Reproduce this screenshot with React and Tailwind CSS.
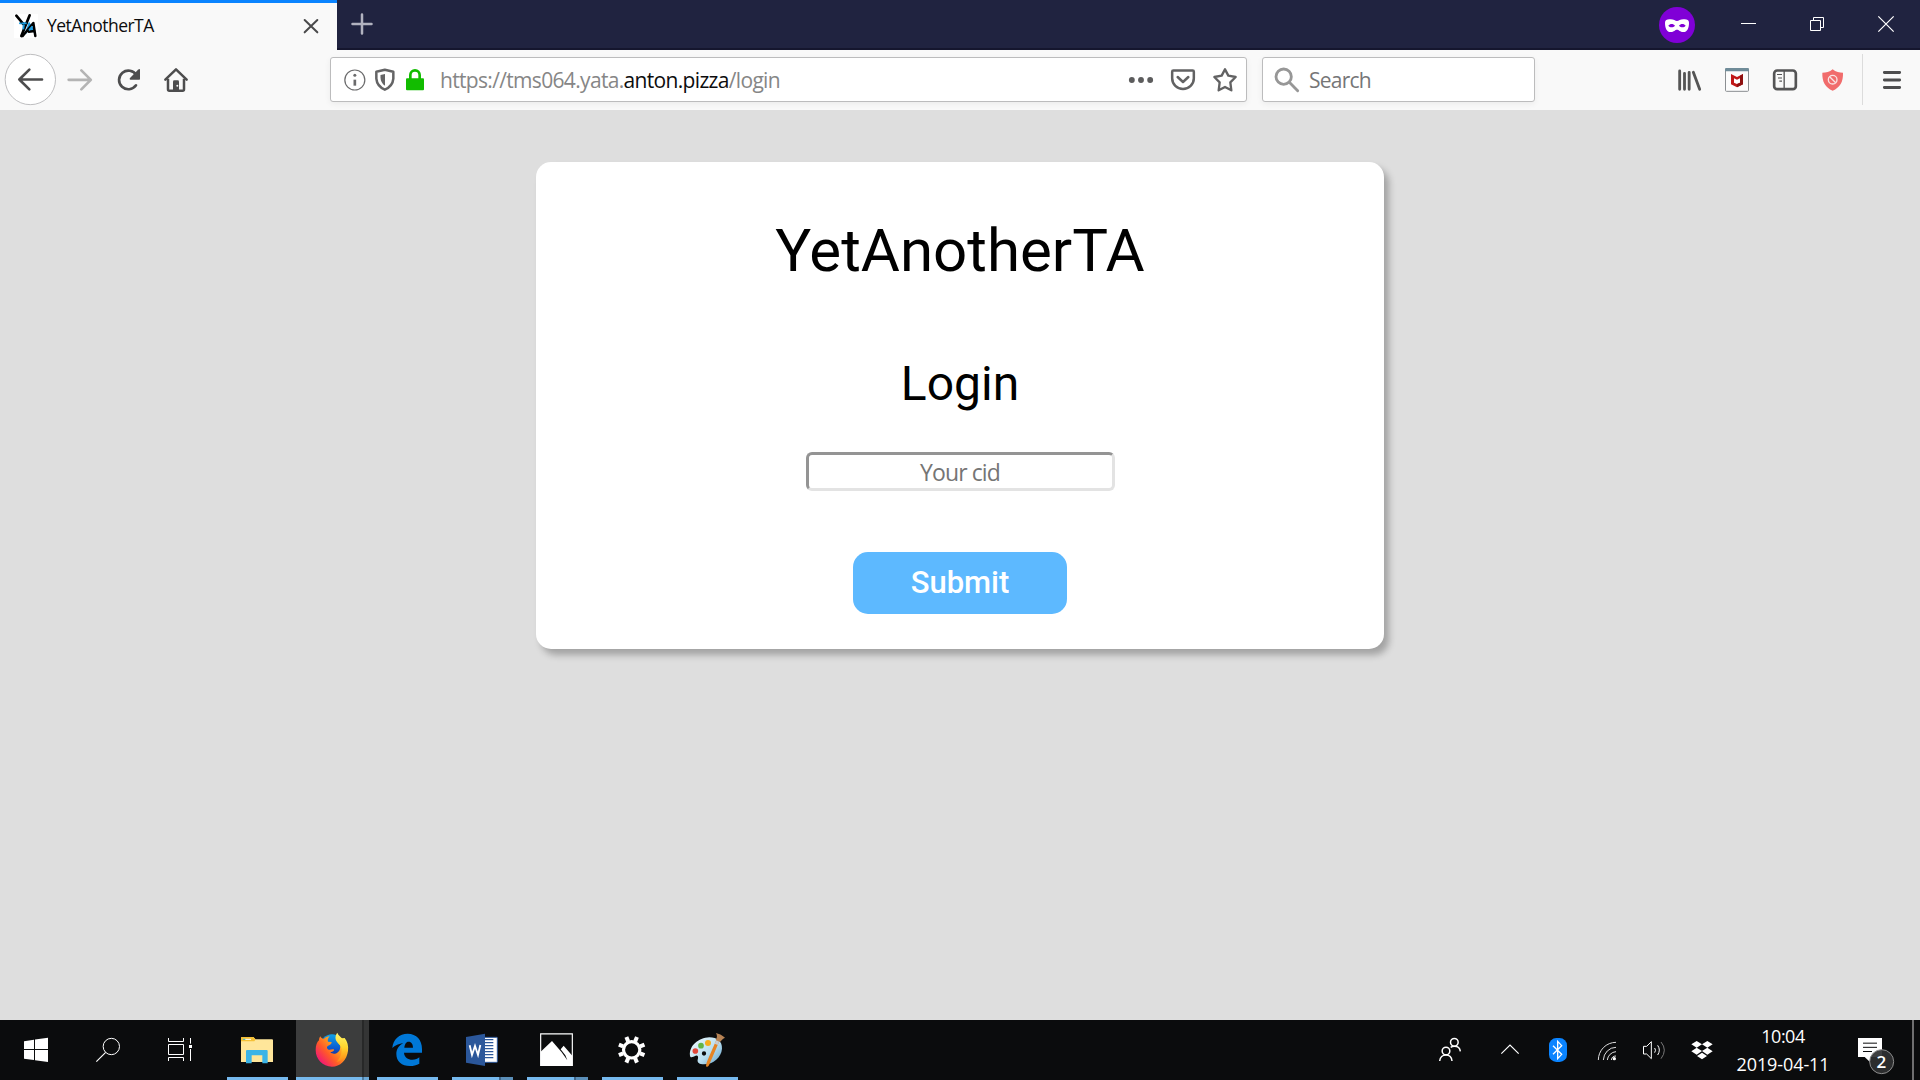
const SEGOE = "font-['Open_Sans','Noto_Sans',sans-serif]";

function Seg({ w, h = 60, vb, children, className = "" }) {
  return (
    <svg width={w} height={h} viewBox={vb} fill="none" className={"block shrink-0 " + className}>
      {children}
    </svg>
  );
}

function TabStrip() {
  return (
    <div className="flex h-[50px] w-full bg-[#202340]">
      <div className="flex h-[50px] w-[337px] shrink-0 items-center border-t-[3px] border-[#0a84ff] bg-[#f9f9f9]">
        <Seg w={47} h={47} vb="0 9 141 141">
          <rect x="42" y="42" width="72" height="72" fill="#fff" />
          <path d="M60 70H82M71 70V92M78 98L88 72L103 95M82 90H100" stroke="#1a9be0" strokeWidth="6" strokeLinecap="round" />
          <path d="M49 47L70 72M89 46L64 108" stroke="#000" strokeWidth="8" strokeLinecap="round" />
          <path d="M68 108L100 69L106 108M86 95L104 93" stroke="#000" strokeWidth="7.500" strokeLinecap="round" strokeLinejoin="round" />
          <path d="M64 70H80M72 74L70 88M87 91L97 79" stroke="#1a9be0" strokeWidth="5" />
        </Seg>
        <span className={"-mt-[3px] w-[250px] text-[17.5px] leading-[24px] tracking-[-0.5px] text-[#0c0c0d] " + SEGOE}>YetAnotherTA</span>
        <Seg w={40} h={47} vb="891 9 120 141">
          <path d="M914 60L952 97M952 60L914 97" stroke="#4a4a4b" strokeWidth="6" strokeLinecap="round" />
        </Seg>
      </div>
      <div className="flex h-[50px] grow justify-between border-b-2 border-[#15162e]">
        <Seg w={60} h={48} vb="1011 0 180 144">
          <path d="M1086 43.500V100.500M1057.500 72H1114.500" stroke="#b1b2bf" strokeWidth="7.500" strokeLinecap="round" />
        </Seg>
        <Seg w={270} h={48} vb="90 0 810 144">
          <circle cx="171" cy="75" r="54" fill="#8000d7" />
          <path fillRule="evenodd" d="M135 68C135 59 143 57 152 58C161 58 166 63 171 63C176 63 181 58 190 58C199 57 207 59 207 68C207 84 202 96 190 96C180 96 177 89 171 89C165 89 162 96 152 96C140 96 135 84 135 68ZM145 77C150 70 160 70 165 77C159 83 150 83 145 77ZM177 77C182 70 192 70 197 77C192 83 183 83 177 77Z" fill="#fff" />
          <path d="M363 70.500H408" stroke="#fff" strokeWidth="3" />
          <path d="M571.500 61.500H601.500V91.500H571.500ZM580.500 61V52.500H610.500V82.500H602" stroke="#fff" strokeWidth="3" />
          <path d="M775 49L821 95M821 49L775 95" stroke="#fff" strokeWidth="3.700" />
        </Seg>
      </div>
    </div>
  );
}

function Toolbar() {
  return (
    <div className="flex h-[60px] w-full items-center bg-[#f9f9f9]">
      <Seg w={60} vb="0 150 180 180">
        <circle cx="91" cy="238.500" r="75.500" fill="#fff" stroke="#b1b1b3" strokeWidth="2.500" />
        <path d="M126 238.500H58M88 209L58 238.500L88 268" stroke="#4d4d4e" strokeWidth="8" strokeLinecap="round" strokeLinejoin="round" />
      </Seg>
      <Seg w={45} vb="180 150 135 180">
        <path d="M206 239.500H272M244 211L272.500 239.500L244 268" stroke="#b4b4b4" strokeWidth="8" strokeLinecap="round" strokeLinejoin="round" />
      </Seg>
      <Seg w={45} vb="315 150 135 180">
        <path d="M409 225A28 28 0 1 0 408 256" stroke="#4d4d4e" strokeWidth="8" strokeLinecap="round" />
        <path d="M420 210V237Q420 239 418 239H391Q387 238 390 234L414 209Q420 205 420 210Z" fill="#4d4d4e" />
      </Seg>
      <Seg w={60} vb="450 150 180 180">
        <path d="M496 239L528 208L560 239" stroke="#4d4d4e" strokeWidth="7.500" strokeLinecap="round" strokeLinejoin="round" />
        <path d="M504 236V268Q504 272.500 508 272.500H548Q552 272.500 552 268V236" stroke="#4d4d4e" strokeWidth="7.500" />
        <path d="M519 276V245Q519 241 523 241H533Q537 241 537 245V276Z" fill="#4d4d4e" />
        <circle cx="532" cy="257" r="3" fill="#f9f9f9" />
      </Seg>
      <div className="w-[120px] shrink-0" />
      <div className="-mt-px flex h-[45px] w-[917px] shrink-0 items-center rounded-[3px] border border-[#bcbcbd] bg-white shadow-[0_2px_6px_rgba(0,0,0,0.06)]">
        <Seg w={109} h={43} vb="33 39 327 129">
          <circle cx="104.500" cy="105" r="30" stroke="#6b6b6c" strokeWidth="3.700" />
          <path d="M104.500 104V122" stroke="#6b6b6c" strokeWidth="8" />
          <circle cx="104.500" cy="90.500" r="4.500" fill="#6b6b6c" />
          <path d="M194.500 74L220 80V101Q218 124 194.500 134Q171 124 169 101V80Z" stroke="#646465" strokeWidth="7.500" strokeLinejoin="round" />
          <path d="M195 87V122Q182 113 181.500 98V90Z" fill="#646465" />
          <path d="M271 102V90A14 14 0 0 1 299 90V102" stroke="#12bc00" strokeWidth="8" />
          <rect x="258" y="100" width="54" height="36" rx="3" fill="#12bc00" />
        </Seg>
        <div className={"w-[679px] whitespace-pre pt-px text-[21px] leading-[30px] tracking-[-0.67px] text-[#868686] " + SEGOE}>
          https://tms064.yata.<span className="text-[#0c0c0d]">anton.pizza</span>/login
        </div>
        <Seg w={127} h={43} vb="57 39 381 129">
          <g fill="#5c5c5d">
            <circle cx="95.500" cy="105" r="8.800" />
            <circle cx="123" cy="105" r="8.800" />
            <circle cx="150.500" cy="105" r="8.800" />
          </g>
          <path d="M216.500 80Q216.500 76.500 220 76.500H278Q281.500 76.500 281.500 80V100A32.500 32 0 0 1 216.500 100Z" stroke="#626263" strokeWidth="7.500" />
          <path d="M233 96L249 111L265 96" stroke="#626263" strokeWidth="7.500" strokeLinecap="round" strokeLinejoin="round" />
          <path d="M375 73L385 92L407 96L391 112L394 136L375 126L356 136L359 112L343 96L365 92Z" stroke="#626263" strokeWidth="7" strokeLinejoin="round" />
        </Seg>
      </div>
      <div className="-mt-px ml-[15px] flex h-[45px] w-[273px] shrink-0 items-center rounded-[3px] border border-[#bcbcbd] bg-white shadow-[0_2px_6px_rgba(0,0,0,0.06)]">
        <Seg w={46} h={43} vb="489 39 138 129">
          <circle cx="551" cy="95" r="23" stroke="#979797" strokeWidth="8.500" />
          <path d="M568 112L593 137" stroke="#979797" strokeWidth="8.500" strokeLinecap="round" />
        </Seg>
        <span className={"pt-px text-[21px] leading-[30px] tracking-[-0.75px] text-[#767677] " + SEGOE}>Search</span>
      </div>
      <div className="grow" />
      <Seg w={55} vb="120 150 165 180">
        <path d="M179 213V268M193.500 220V268M207.500 217V268M220 217L239 268" stroke="#555" strokeWidth="8.500" strokeLinecap="round" />
      </Seg>
      <Seg w={45} vb="285 150 135 180">
        <rect x="316.500" y="206" width="69" height="68" rx="3" fill="#fcfcfc" stroke="#8b8f92" strokeWidth="3" />
        <path d="M315 208Q315 204 319 204H383Q387 204 387 208V214H315Z" fill="#708c99" />
        <path d="M333 222L351 231L369 222V253L351 262L333 253Z" fill="#c01818" />
        <path d="M342 235L351 239L360 235V248L351 252L342 248Z" fill="#fff" />
        <path d="M369 222V253L351 262V252L360 248V227Z" fill="#8e1111" />
      </Seg>
      <Seg w={45} vb="420 150 135 180">
        <rect x="462.500" y="211.500" width="65" height="56" rx="9" stroke="#545455" strokeWidth="8" />
        <path d="M492.500 213V266" stroke="#545455" strokeWidth="4" />
        <path d="M471 223.500H486M474 234H486M478 243.500H486" stroke="#545455" strokeWidth="3.500" />
      </Seg>
      <Seg w={57} vb="555 150 171 180">
        <path d="M638 208C647 216 659 218 669 218C670 246 660 262 638 272C616 262 606 246 607 218C618 218 629 216 638 208Z" fill="#f16c6c" />
        <circle cx="638" cy="239" r="13" stroke="#f9e3e3" strokeWidth="4" />
        <path d="M629 230L647 248" stroke="#f9e3e3" strokeWidth="4" />
      </Seg>
      <div className="-mt-px h-[51px] w-px shrink-0 bg-[#dcdcdc]" />
      <Seg w={57} vb="729 150 171 180">
        <path d="M793 217.500H839M793 240H839M793 262.500H839" stroke="#4d4d4e" strokeWidth="8.500" strokeLinecap="round" />
      </Seg>
    </div>
  );
}

function LoginCard() {
  return (
    <div className="flex h-[487px] w-[848px] flex-col items-center rounded-[15px] bg-white font-[Roboto,sans-serif] text-black shadow-[5px_6px_7px_rgba(0,0,0,0.27)]">
      <h1 className="mt-[54px] text-[60px] leading-[70px]">YetAnotherTA</h1>
      <h2 className="mt-[70px] text-[48px] leading-[56px]">Login</h2>
      <input
        placeholder="Your cid"
        className={"mt-[40px] h-[39px] w-[309px] rounded-[6px] border-[3px] border-t-[#949494] border-l-[#949494] border-r-[#e3e3e3] border-b-[#e3e3e3] bg-white text-center text-[23px] tracking-[-0.9px] placeholder:text-[#757575] " + SEGOE}
      />
      <button className="mt-[61px] h-[62px] w-[214px] rounded-[15px] bg-[#5db9ff] text-[31px] font-medium text-white">Submit</button>
    </div>
  );
}

function TaskItem({ vb, split, active, children }) {
  return (
    <div className="flex h-[60px] w-[75px] shrink-0 flex-col">
      <div className="flex h-[57px]">
        <div className={active ? "ml-px h-[57px] w-[66px] bg-[#3c3d3d]" : "ml-px w-[66px]"}>
          <Seg w={66} h={57} vb={vb}>{children}</Seg>
        </div>
        {active && <div className="w-[2px] bg-[#272828]" />}
        {active && <div className="w-[5px] bg-[#343535]" />}
      </div>
      <div className="flex h-[3px]">
        {active ? (
          <>
            <div className="ml-px w-[66px] bg-[#76b9ed]" />
            <div className="w-[2px] bg-[#4f7c9f]" />
            <div className="w-[5px] bg-[#6ba7d5]" />
          </>
        ) : split ? (
          <>
            <div className="ml-[7px] w-[47px] bg-[#76b9ed]" />
            <div className="w-[2px] bg-[#41678a]" />
            <div className="w-[12px] bg-[#5b8fb8]" />
          </>
        ) : (
          <div className="ml-[7px] w-[61px] bg-[#76b9ed]" />
        )}
      </div>
    </div>
  );
}

function Taskbar() {
  return (
    <div className="flex h-[60px] w-full bg-[#0b0c0d]">
      <Seg w={70} vb="0 30 210 180">
        <path d="M72 94L102 89V117H72ZM105 88.500L144 83V117H105ZM72 120H102V150L72 146ZM105 120H144V156L105 150.500Z" fill="#fff" />
      </Seg>
      <Seg w={80} vb="210 30 240 180">
        <circle cx="334" cy="109.500" r="24.500" stroke="#fff" strokeWidth="3" />
        <path d="M317 127L289 155" stroke="#fff" strokeWidth="3.500" />
      </Seg>
      <Seg w={70} vb="450 30 210 180">
        <path d="M505.500 84V94.500H550.500V84M505.500 103.500H550.500V133.500H505.500ZM505.500 153V142.500H550.500V153M571.500 84V101M571.500 117V153" stroke="#fff" strokeWidth="3" />
        <rect x="567" y="105" width="9" height="9" fill="#fff" />
      </Seg>
      <TaskItem vb="663 30 198 171">
        <path d="M723 84Q723 81 726 81H760L766 88H816Q819 88 819 91V156H723Z" fill="#ffe69a" />
        <path d="M723 84Q723 81 726 81H760L767 88L763 94H723Z" fill="#f5c137" />
        <path d="M729 88H753" stroke="#fff" strokeWidth="3" />
        <path d="M729 88H736" stroke="#3bb6a6" strokeWidth="3" />
        <path d="M738 160V123Q738 120 741 120H800Q803 120 803 123V160H787V136H755V160Z" fill="#3cb4e7" />
      </TaskItem>
      <TaskItem active vb="888 30 198 171">
        <defs>
          <linearGradient id="fox" x1="1035" y1="85" x2="955" y2="155" gradientUnits="userSpaceOnUse">
            <stop offset="0" stopColor="#fff44f" />
            <stop offset="0.350" stopColor="#ffa01e" />
            <stop offset="0.650" stopColor="#ff5a28" />
            <stop offset="1" stopColor="#f0127c" />
          </linearGradient>
          <linearGradient id="foxtail" x1="1015" y1="70" x2="1020" y2="155" gradientUnits="userSpaceOnUse">
            <stop offset="0" stopColor="#fff36a" />
            <stop offset="0.500" stopColor="#ffd52c" />
            <stop offset="1" stopColor="#ff8a16" />
          </linearGradient>
          <linearGradient id="globe" x1="1000" y1="72" x2="995" y2="145" gradientUnits="userSpaceOnUse">
            <stop offset="0" stopColor="#10a4e8" />
            <stop offset="0.600" stopColor="#0b57cf" />
            <stop offset="1" stopColor="#20207e" />
          </linearGradient>
        </defs>
        <circle cx="996" cy="109" r="36" fill="url(#globe)" />
        <path d="M961 79C963 84 966 86 971 87C976 82 983 79 989 79C984 84 982 90 984 95L995 96C995 103 989 105 983 108C979 111 981 117 986 119C991 120 996 116 1001 118C1004 120 1000 126 991 127C1002 137 1018 128 1020 116C1022 108 1020 102 1015 98C1020 99 1024 101 1027 105C1026 95 1020 90 1014 86L1034 84C1042 94 1046 108 1044 122C1041 150 1020 170 996 170C968 170 947 148 947 120C947 106 951 96 957 91C957 86 959 82 961 79Z" fill="url(#fox)" />
        <path d="M1012 68C1014 76 1022 80 1030 88C1041 100 1044 112 1042 122C1039 142 1025 153 1009 156C1021 145 1026 129 1025 116C1023 104 1010 100 1007 88C1005 80 1008 73 1012 68Z" fill="url(#foxtail)" />
      </TaskItem>
      <TaskItem vb="3 30 198 171">
        <path d="M67 114C69 88 88 71 113 71C140 71 156 90 156 117V128H102C103 142 114 149 127 149C136 149 143 146 148 142V161C139 166 130 168 120 168C95 168 79 154 79 132C79 117 87 106 100 99C88 101 74 106 67 114ZM103 113H129C129 102 124 95 116 95C108 95 104 103 103 113Z" fill="#0078d7" />
      </TaskItem>
      <TaskItem split vb="228 30 198 171">
        <rect x="340" y="82" width="42" height="75" rx="2" fill="#fff" stroke="#2b579a" strokeWidth="3" />
        <path d="M342 89H370M342 98H370M342 107H370M342 116H370M342 125H370M342 134H370M342 143H370" stroke="#2b579a" strokeWidth="3.500" />
        <path d="M288 81L345 71V168L288 158Z" fill="#2b579a" />
        <path d="M299 106L306 135L315 108L324 135L331 105" stroke="#fff" strokeWidth="5.500" />
      </TaskItem>
      <TaskItem split vb="453 30 198 171">
        <path d="M512 71.500H607V166H512Z" stroke="#fff" strokeWidth="3.500" />
        <path d="M512 125L546 93L575 127L592 151L586 136L572 118L581 107L607 137V167H512Z" fill="#fff" />
      </TaskItem>
      <TaskItem vb="678 30 198 171">
        <circle cx="785" cy="119.500" r="24.500" stroke="#fff" strokeWidth="9.500" />
        <g stroke="#fff" strokeWidth="12">
          <path d="M785 78V92" transform="rotate(22.500 785 119.500)" />
          <path d="M785 78V92" transform="rotate(67.500 785 119.500)" />
          <path d="M785 78V92" transform="rotate(112.500 785 119.500)" />
          <path d="M785 78V92" transform="rotate(157.500 785 119.500)" />
          <path d="M785 78V92" transform="rotate(202.500 785 119.500)" />
          <path d="M785 78V92" transform="rotate(247.500 785 119.500)" />
          <path d="M785 78V92" transform="rotate(292.500 785 119.500)" />
          <path d="M785 78V92" transform="rotate(337.500 785 119.500)" />
        </g>
      </TaskItem>
      <TaskItem vb="903 30 198 171">
        <defs>
          <linearGradient id="pal" x1="970" y1="85" x2="1045" y2="160" gradientUnits="userSpaceOnUse">
            <stop offset="0" stopColor="#e9f6fb" />
            <stop offset="0.600" stopColor="#b9dff0" />
            <stop offset="1" stopColor="#6fabd0" />
          </linearGradient>
        </defs>
        <path d="M1018 82C1042 82 1057 95 1056 116C1054 142 1030 163 1002 163C988 163 981 157 983 149C986 141 984 136 977 137C970 139 962 146 960 137C957 108 985 83 1018 82ZM1002 124A6.500 6.500 0 1 0 1002 137A6.500 6.500 0 1 0 1002 124Z" fillRule="evenodd" fill="url(#pal)" />
        <circle cx="976" cy="123" r="8.500" fill="#e2493b" />
        <circle cx="993" cy="107" r="8.500" fill="#63b545" />
        <circle cx="1014" cy="99" r="9" fill="#f6ad1c" />
        <path d="M1039 90L1048 94L1017 166Q1011 174 1008 168Q1009 158 1013 150Z" fill="#e58424" />
        <path d="M1039 90L1048 94L1043 105L1034 101Z" fill="#c8ccd0" />
        <path d="M1038 69C1046 71 1056 75 1065 83C1059 85 1055 90 1050 96L1037 90C1042 83 1042 76 1038 69Z" fill="#b78354" />
      </TaskItem>
      <div className="grow" />
      <Seg w={60} vb="90 30 180 180">
        <g stroke="#fff" strokeWidth="4.500">
          <circle cx="163" cy="97" r="11.500" />
          <circle cx="138" cy="123" r="11.500" />
          <path d="M119 153C120 142 128 135 138 135C148 135 155 142 156 153M152 112C155 110 159 109 163 109C173 109 180 115 181 124" />
        </g>
      </Seg>
      <Seg w={50} vb="270 30 150 180">
        <path d="M304 131L330 105L356 131" stroke="#fff" strokeWidth="3.500" />
      </Seg>
      <Seg w={50} vb="420 30 150 180">
        <rect x="447" y="84" width="54" height="72" rx="22" fill="#0a84ff" />
        <path d="M459 107L485 133L473 146V94L485 107L459 133" stroke="#fff" strokeWidth="4" />
      </Seg>
      <Seg w={50} vb="570 30 150 180">
        <path d="M595 150A53 53 0 0 1 648 97M610 150A38 40 0 0 1 648 112" stroke="#ddd" strokeWidth="3" />
        <path d="M622 150A28 28 0 0 1 648 125M634 150A14 14 0 0 1 648 138" stroke="#ddd" strokeWidth="3" />
        <circle cx="643" cy="146" r="5" fill="#fff" />
      </Seg>
      <Seg w={45} vb="720 30 135 180">
        <path d="M730.500 109H740L754 95V146L740 132H730.500Z" stroke="#fff" strokeWidth="3" />
        <path d="M764 114Q769 120.500 764 128M773 106Q783 120 773 135" stroke="#fff" strokeWidth="3" />
        <path d="M783 96Q803 120 783 146" stroke="#777" strokeWidth="3" />
      </Seg>
      <Seg w={46} vb="855 30 138 180">
        <path d="M890 93L906 103L890 113L874 103ZM922 93L938 103L922 113L906 103ZM890 113L906 123L890 134L874 124ZM922 113L938 124L922 134L906 123ZM906 128L921 138L906 148L891 138Z" fill="#fff" />
      </Seg>
      <div className={"flex h-[60px] w-[104px] shrink-0 flex-col items-center pt-[2px] text-[18px] leading-[28px] text-white " + SEGOE}>
        <span className="tracking-[-0.5px]">10:04</span>
        <span className="tracking-[-0.1px]">2019-04-11</span>
      </div>
      <Seg w={77} vb="1305 30 231 180">
        <path d="M1374 84H1446V141H1410V156L1394 141H1374Z" fill="#fff" />
        <path d="M1389 99.500H1431M1389 112H1431M1389 124.500H1416" stroke="#0b0c0d" strokeWidth="3" />
        <circle cx="1445" cy="155" r="36" fill="#2f3031" fillOpacity="0.930" stroke="#8c8c8c" strokeWidth="3" />
        <text x="1444" y="174" textAnchor="middle" fontFamily="Open Sans" fontSize="51" fontWeight="600" fill="#fff">2</text>
      </Seg>
      <div className="w-[2px] shrink-0 bg-[#6f6f70]" />
      <div className="w-[6px] shrink-0" />
    </div>
  );
}

export default function App() {
  return (
    <div className="flex h-[1080px] w-[1920px] flex-col overflow-hidden">
      <TabStrip />
      <Toolbar />
      <main className="flex h-[910px] justify-center bg-[#dedede] pt-[52px]">
        <LoginCard />
      </main>
      <Taskbar />
    </div>
  );
}
